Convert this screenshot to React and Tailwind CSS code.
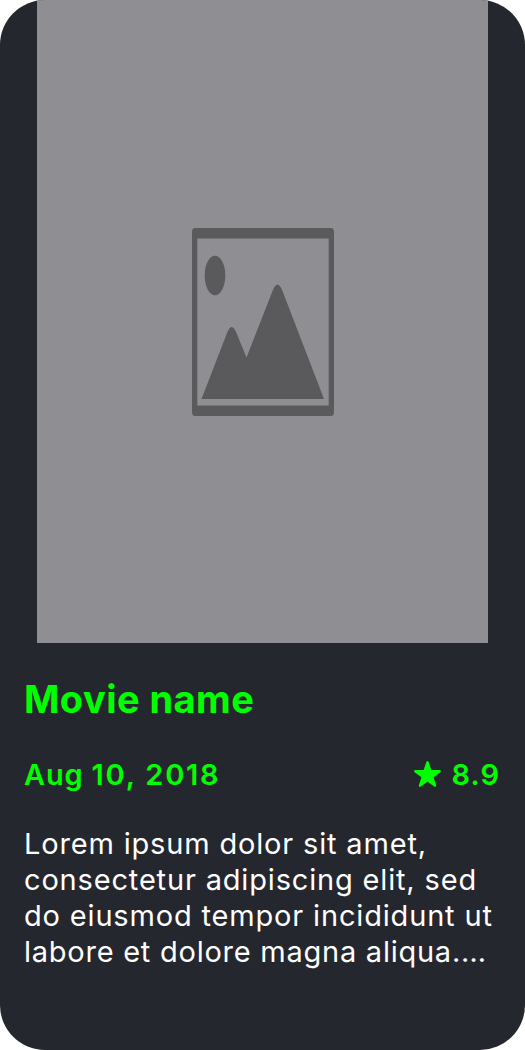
export default function App() {
  return (
    <div className="h-[1050px] w-[525px] bg-white">
      <article className="flex h-full w-full flex-col overflow-hidden rounded-[45px] bg-[#25272f] font-[Inter,sans-serif]">
        <div className="mx-[37px] flex h-[643px] w-[451px] shrink-0 items-start justify-center bg-[#8f8e93] pt-[228px]">
          <svg className="h-[188px] w-[142px]" viewBox="0 0 142 188" fill="#5a5a5c">
            <path fillRule="evenodd" d="M3 0H139Q142 0 142 4V184Q142 188 139 188H3Q0 188 0 184V4Q0 0 3 0ZM5.300 10.500V177.500H136.700V10.500Z" />
            <ellipse cx="23" cy="47.500" rx="10.300" ry="19.800" />
            <path d="M9.500 171L35 105Q39.700 93 44.500 105L54.500 129.500L80.500 63Q85.500 50 90.500 63L132 171Z" />
          </svg>
        </div>
        <div className="flex flex-col pr-[25px] pl-[24px] pt-[32px]">
          <h1 className="h-[48px] whitespace-nowrap text-[38px] leading-[48px] font-bold tracking-[0.45px] text-[#00ff00]">Movie name</h1>
          <div className="mt-[34px] flex h-[36px] items-center justify-between text-[29px] leading-[36px] font-[560] tracking-[1px] text-[#00ff00]">
            <time className="whitespace-pre tracking-[0.8px]">Aug <span className="tracking-[1.8px]">10, 2018</span></time>
            <div className="flex items-center gap-[11px]">
              <svg className="mb-[3px] h-[26px] w-[27px]" viewBox="0 0 27 26" fill="currentColor">
                <path d="M12.300 1.100Q13.500-1 14.700 1.100L17.300 9.100H25.500Q28 9.500 26.200 11.400L19.500 16.300L22.100 24Q22.500 26.500 20.200 25.500L13.500 20.800L6.800 25.500Q4.500 26.500 4.900 24L7.500 16.300L.8 11.400Q-1 9.500 1.500 9.100H9.700Z" />
              </svg>
              <span>8.9</span>
            </div>
          </div>
          <p className="mt-[33px] whitespace-nowrap text-[29px] leading-[36px] tracking-[0.83px] text-white">
            Lorem ipsum dolor sit amet,<br />consectetur adipiscing elit, sed<br />do eiusmod tempor incididunt ut<br /><span className="tracking-[0.75px]">labore et dolore magna aliqua.…</span>
          </p>
        </div>
      </article>
    </div>
  );
}
